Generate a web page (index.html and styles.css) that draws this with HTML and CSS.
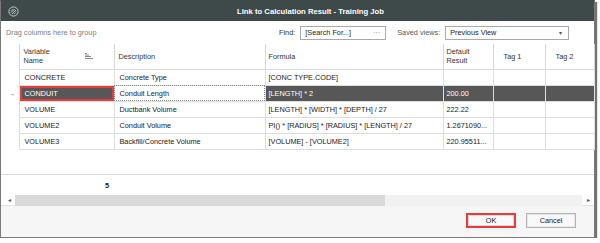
FILE: index.html
```html
<!DOCTYPE html>
<html lang="en">
<head>
        <meta charset="UTF-8">
        <title>Link to Calculation Result - Training Job</title>
        <link rel="stylesheet" href="styles.css">
</head>
<body>
        <div class="window">
                <div class="titlebar">
                        <svg class="app-icon" width="11" height="11" viewBox="0 0 11 11">
                                <circle cx="5.5" cy="5.5" r="4.6" fill="none" stroke="#c3cbcb" stroke-width="1"/>
                                <path d="M3 6.5 L6.5 3 M4 8 L8 4 M3.2 4.6 L4.6 3.2 M6.4 7.8 L7.8 6.4" stroke="#c3cbcb" stroke-width="1" fill="none"/>
                        </svg>
                        <span class="title">Link to Calculation Result - Training Job</span>
                </div>

                <div class="toolbar">
                        <span class="group-hint">Drag columns here to group</span>
                        <span class="label">Find:</span>
                        <div class="search">
                                <span>[Search For...]</span>
                                <span class="dots">···</span>
                        </div>
                        <span class="label views">Saved views:</span>
                        <div class="select">
                                <span>Previous View</span>
                                <span class="caret">▾</span>
                        </div>
                </div>

                <div class="grid">
                        <table>
                                <colgroup>
                                        <col class="c-ind">
                                        <col class="c-name">
                                        <col class="c-desc">
                                        <col class="c-formula">
                                        <col class="c-default">
                                        <col class="c-tag">
                                        <col class="c-tag2">
                                </colgroup>
                                <thead>
                                        <tr>
                                                <th class="ind"></th>
                                                <th>
                                                        <div class="head-sort">
                                                                <span>Variable<br>Name</span>
                                                                <svg width="8" height="6" viewBox="0 0 8 6">
                                                                        <path d="M0 0.5 H2 M0 2 H4 M0 3.5 H6 M0 5.5 H8" stroke="#8a8a8a" stroke-width="1"/>
                                                                </svg>
                                                        </div>
                                                </th>
                                                <th>Description</th>
                                                <th class="pad-s">Formula</th>
                                                <th class="pad-s">Default<br>Result</th>
                                                <th class="tag">Tag 1</th>
                                                <th class="tag">Tag 2</th>
                                        </tr>
                                </thead>
                                <tbody>
                                        <tr>
                                                <td class="ind"></td>
                                                <td>CONCRETE</td>
                                                <td>Concrete Type</td>
                                                <td class="pad-s">[CONC TYPE.CODE]</td>
                                                <td class="pad-s"></td>
                                                <td></td>
                                                <td></td>
                                        </tr>
                                        <tr class="selected">
                                                <td class="ind">→</td>
                                                <td class="marked">CONDUIT</td>
                                                <td class="focused">Conduit Length</td>
                                                <td class="pad-s">[LENGTH] * 2</td>
                                                <td class="pad-s">200.00</td>
                                                <td></td>
                                                <td></td>
                                        </tr>
                                        <tr>
                                                <td class="ind"></td>
                                                <td>VOLUME</td>
                                                <td>Ductbank Volume</td>
                                                <td class="pad-s">[LENGTH] * [WIDTH] * [DEPTH] / 27</td>
                                                <td class="pad-s">222.22</td>
                                                <td></td>
                                                <td></td>
                                        </tr>
                                        <tr>
                                                <td class="ind"></td>
                                                <td>VOLUME2</td>
                                                <td>Conduit Volume</td>
                                                <td class="pad-s">PI() * [RADIUS] * [RADIUS] * [LENGTH] / 27</td>
                                                <td class="pad-s">1.2671090...</td>
                                                <td></td>
                                                <td></td>
                                        </tr>
                                        <tr>
                                                <td class="ind"></td>
                                                <td>VOLUME3</td>
                                                <td>Backfill/Concrete Volume</td>
                                                <td class="pad-s">[VOLUME] - [VOLUME2]</td>
                                                <td class="pad-s">220.95511...</td>
                                                <td></td>
                                                <td></td>
                                        </tr>
                                </tbody>
                        </table>
                </div>

                <div class="summary">
                        <span class="count">5</span>
                </div>

                <div class="hscroll">
                        <span class="arrow">◂</span>
                        <span class="thumb"></span>
                        <span class="track"></span>
                        <span class="arrow">▸</span>
                </div>

                <div class="buttons">
                        <button class="btn ok">OK</button>
                        <button class="btn">Cancel</button>
                </div>
        </div>
</body>
</html>
```

FILE: styles.css
```css
* {
        margin: 0;
        padding: 0;
        box-sizing: border-box;
}

body {
        background: #ffffff;
        font-family: "Liberation Sans", Arial, sans-serif;
        font-size: 7.3px;
        color: #222222;
}

.window {
        width: 595px;
        height: 238px;
        display: flex;
        flex-direction: column;
        background: #f6f6f6;
        border: 1px solid #7a7a7a;
        border-top-color: #3e4a4a;
        box-shadow: 2px 2px 1px rgba(0, 0, 0, 0.55);
}

.titlebar {
        height: 20px;
        flex: none;
        display: flex;
        align-items: center;
        padding-left: 7px;
        background: #3e4a4a;
}

.app-icon {
        flex: none;
}

.title {
        flex: 1;
        text-align: center;
        padding-left: 8px;
        color: #ffffff;
        font-weight: bold;
        font-size: 7.7px;
}

.toolbar {
        height: 23px;
        flex: none;
        display: flex;
        align-items: center;
        padding-left: 5px;
        background: #ffffff;
}

.group-hint {
        color: #7d7d7d;
        width: 273px;
}

.label {
        color: #333333;
        margin-right: 5px;
}

.views {
        margin-left: 11px;
        color: #555555;
}

.search, .select {
        height: 14px;
        display: flex;
        align-items: center;
        justify-content: space-between;
        padding: 0 5px 0 4px;
        border: 1px solid #a9a9a9;
        background: #ffffff;
        color: #222222;
}

.search {
        width: 86px;
}

.select {
        width: 124px;
        padding-right: 6px;
}

.dots {
        color: #777777;
}

.caret {
        font-size: 6px;
        color: #555555;
}

.grid {
        height: 131px;
        flex: none;
        background: #ffffff;
        padding-left: 2px;
        border-bottom: 1px solid #dadada;
}

table {
        width: 591px;
        table-layout: fixed;
        border-collapse: collapse;
}

.c-ind { width: 16px; }
.c-name { width: 95px; }
.c-desc { width: 151px; }
.c-formula { width: 178px; }
.c-default { width: 50px; }
.c-tag { width: 52px; }
.c-tag2 { width: 49px; }

th {
        height: 25px;
        text-align: left;
        font-weight: normal;
        line-height: 9px;
        color: #333333;
        padding-left: 4px;
        border: 1px solid #d6d6d6;
        border-top: none;
}

th.tag {
        padding-left: 10px;
}

.head-sort {
        display: flex;
        align-items: center;
        justify-content: space-between;
        padding-right: 21px;
}

td {
        height: 16px;
        padding-left: 5px;
        white-space: nowrap;
        overflow: hidden;
        border: 1px solid #dedede;
}

.pad-s {
        padding-left: 3px;
}

th.ind, td.ind {
        border-left: none;
        border-top: none;
        border-bottom: none;
        padding-left: 5px;
        color: #666666;
}

.selected td {
        background: #575757;
        color: #ffffff;
}

.selected td.ind {
        background: #ffffff;
        color: #666666;
}

.selected td.marked {
        box-shadow: inset 0 0 0 2px #e53c3c;
}

.selected td.focused {
        background: #ffffff;
        color: #222222;
        outline: 1px dotted #8a8a8a;
        outline-offset: -1px;
}

.summary {
        height: 20px;
        flex: none;
        display: flex;
        align-items: center;
        background: #ffffff;
        padding-left: 104px;
}

.count {
        font-weight: bold;
}

.hscroll {
        height: 11px;
        flex: none;
        display: flex;
        align-items: center;
        padding-left: 2px;
        background: #ffffff;
        border-bottom: 1px solid #e2e2e2;
}

.arrow {
        width: 12px;
        height: 11px;
        line-height: 11px;
        text-align: center;
        font-size: 6px;
        color: #555555;
}

.thumb {
        width: 370px;
        height: 11px;
        background: #d9d9d9;
}

.track {
        flex: 1;
        height: 11px;
        background: #f1f1f1;
}

.buttons {
        flex: 1;
        display: flex;
        justify-content: flex-end;
        align-items: flex-start;
        gap: 10px;
        padding: 7px 18px 0 0;
}

.btn {
        width: 50px;
        height: 15px;
        font-family: "Liberation Sans", Arial, sans-serif;
        font-size: 7.3px;
        color: #222222;
        background: #f9f9f9;
        border: 1px solid #b4b4b4;
        box-shadow: inset 0 0 0 1px #e6e6e6;
}

.ok {
        border: 2px solid #e53c3c;
        box-shadow: inset 0 0 0 1px #d8d8d8;
}
```
